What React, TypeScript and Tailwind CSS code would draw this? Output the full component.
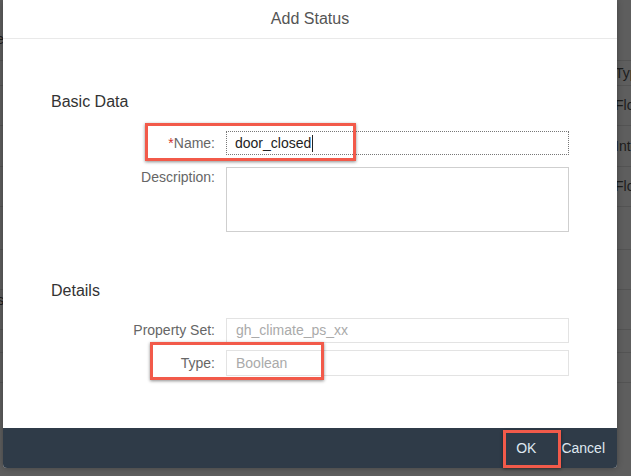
import React from 'react';

const bgRows = [
  { h: 61, right: '', left: 'Name', leftTop: 29 },
  { h: 25, right: 'Type', left: '' },
  { h: 40, right: 'Float', left: '' },
  { h: 41, right: 'Integer', left: '' },
  { h: 40, right: 'Float', left: '' },
  { h: 43, right: '', left: '' },
  { h: 40, right: '', left: '' },
  { h: 40, right: '', left: 'Status', leftTop: 0 },
  { h: 23, right: '', left: '' },
  { h: 30, right: '', left: '' },
];

const Annotation: React.FC<{ className: string }> = ({ className }) => (
  <div
    className={`absolute border-[3px] border-[#f25a4a] shadow-[0_1px_3px_rgba(0,0,0,0.45)] pointer-events-none ${className}`}
  />
);

const App: React.FC = () => {
  return (
    <div className="relative w-[631px] h-[476px] overflow-hidden bg-[#5e5e5e] font-['Liberation_Sans',Arial,sans-serif]">
      {/* page behind the dialog */}
      <div className="flex flex-col">
        {bgRows.map((row, i) => (
          <div
            key={i}
            style={{ height: row.h }}
            className="flex justify-between border-b border-[#535353] text-[14px] text-[#1c1c1c]"
          >
            <div
              style={{ paddingTop: row.leftTop ?? 2 }}
              className="w-[4px] flex justify-end overflow-hidden whitespace-nowrap"
            >
              {row.left}
            </div>
            <div className="w-[17px] pl-[1px] self-center overflow-hidden whitespace-nowrap">{row.right}</div>
          </div>
        ))}
      </div>

      {/* dialog */}
      <div className="absolute left-[3px] top-0 w-[614px] h-[468px] flex flex-col bg-white rounded-b-[4px] shadow-[0_0_6px_rgba(0,0,0,0.3)]">
        <div className="h-[39px] shrink-0 flex items-center justify-center border-b border-[#e9e9e9] text-[16px] text-[#555]">
          Add Status
        </div>

        <div className="flex-1 flex flex-col pl-[48px]">
          <div className="mt-[53px] h-[20px] leading-[20px] text-[16px] text-[#333]">Basic Data</div>

          <div className="mt-[19px] flex items-center">
            <label className="w-[164px] text-right text-[14px] text-[#666]">
              <span className="text-[#d0312d]">*</span>Name:
            </label>
            <div className="ml-[11px] w-[343px] h-[24px] flex items-center border border-dotted border-[#777] pl-[8px] text-[14px] text-[#222]">
              door_closed<span className="ml-[1px] w-px h-[17px] bg-[#222]" />
            </div>
          </div>

          <div className="mt-[12px] flex items-start">
            <label className="w-[164px] pt-[1px] leading-[18px] text-right text-[14px] text-[#666]">Description:</label>
            <div className="ml-[11px] w-[343px] h-[65px] border border-[#cfcfcf]" />
          </div>

          <div className="mt-[49px] h-[20px] leading-[20px] text-[16px] text-[#333]">Details</div>

          <div className="mt-[17px] flex items-center">
            <label className="w-[164px] text-right text-[14px] text-[#666]">Property Set:</label>
            <div className="ml-[11px] w-[343px] h-[25px] flex items-center border border-[#e3e3e3] pl-[9px] text-[14px] text-[#aaa]">
              gh_climate_ps_xx
            </div>
          </div>

          <div className="mt-[7px] flex items-center">
            <label className="w-[164px] text-right text-[14px] text-[#666]">Type:</label>
            <div className="ml-[11px] w-[343px] h-[26px] flex items-center border border-[#e3e3e3] pl-[9px] text-[14px] text-[#aaa]">
              Boolean
            </div>
          </div>
        </div>

        <div className="h-[40px] shrink-0 flex items-center justify-end gap-[13px] pr-[12px] bg-[#2f3b48] rounded-b-[4px] text-[14px] text-[#dfe8f1]">
          <button className="px-[12px] h-[36px]">OK</button>
          <button className="h-[36px]">Cancel</button>
        </div>
      </div>

      {/* highlight boxes */}
      <Annotation className="left-[145px] top-[123px] w-[211px] h-[38px]" />
      <Annotation className="left-[150px] top-[342px] w-[174px] h-[38px]" />
      <Annotation className="left-[503px] top-[430px] w-[58px] h-[38px]" />
    </div>
  );
};

export default App;
